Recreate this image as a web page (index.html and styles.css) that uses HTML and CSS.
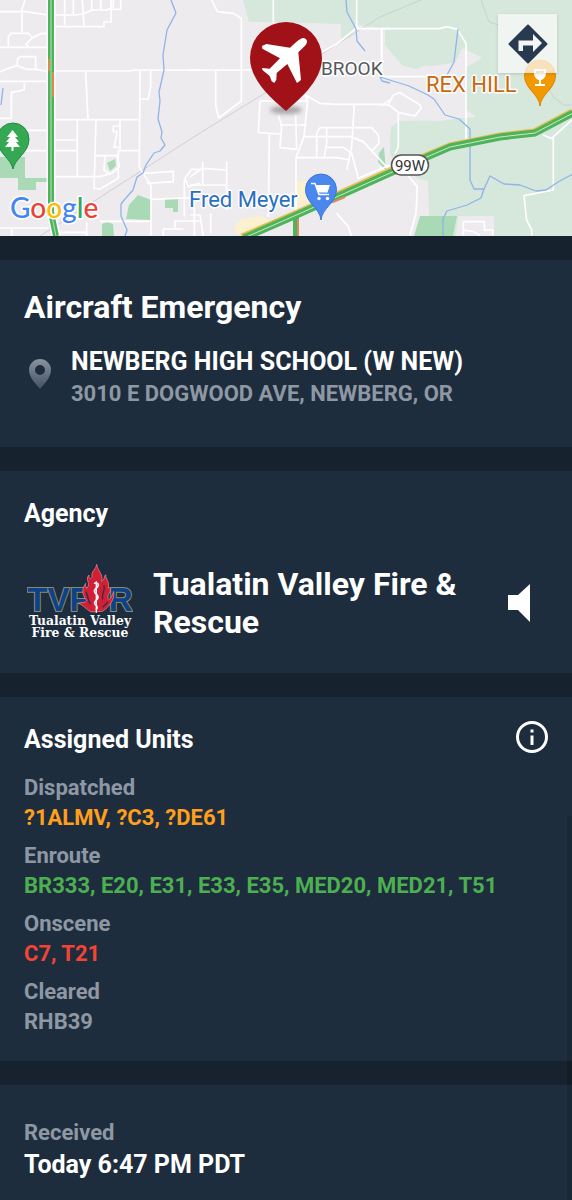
FILE: index.html
```html
<!DOCTYPE html>
<html lang="en">
<head>
<meta charset="utf-8">
<meta name="viewport" content="width=device-width, initial-scale=1">
<title>Aircraft Emergency</title>
<link rel="stylesheet" href="styles.css">
</head>
<body>
<main class="incident">
  <section class="map" aria-label="Incident map">
    <svg class="map-canvas" viewBox="0 0 572 236" preserveAspectRatio="xMidYMid slice" role="img" aria-label="Map of Newberg">
      <rect width="572" height="236" fill="#eeebef"/>
      <!-- parks and wooded areas -->
      <g fill="#d6e7dc">
        <path d="M243 0H572V236H446L450 236 430 236 428 181 419 179 399 166 390 154V126L402 119 440 121 475 116 458 104 467 61 481 57 462 49 458 62 432 66 418 69 407 71 385 45V29L358 25 350 38 341 39V24L262 22 249 22Z"/>
      </g>
      <path d="M380 42L397 64 415 69 428 65 432 76 448 77 462 48 482 58 465 68 465 110 475 117 440 120 400 121 391 127 389 150 380 160Z" fill="#eeebef"/>
      <path d="M458 216H494V236H456Z" fill="#eeebef"/>
      <g fill="#a9dab5">
        <path d="M0 157H25V178H48V182H36V190H18V178H0Z"/>
        <path d="M107 163l8-4 1 7-6 5zM126 219l3-14 9-10 13 5v20zM165 199h13v13h-5v-4h-8zM102 224l5-2 6 2 1 12h-12zM0 229v7z"/>
        <path d="M420 216H457L453 236H414ZM379 153l5-6 2 24-8-9z"/>
      </g>
      <path d="M234 226l8-7 20-3 8 6-20 12h-14zM297 181h15v19l-18 10z" fill="#fbf0cf"/>
      <!-- railway and trails -->
      <path d="M40 236L200 133 270 90 325 52 380 17 440-8M481 0l8 22 20 6M549 88l5 10 10 7h8" fill="none" stroke="#cfcfd3"/>
      <!-- minor roads, west -->
      <g class="road" transform="scale(.3333)">
        <path d="M0 35H75L145 45M75 0L66 28V97M0 142H145M25 142V110L33 100H85L97 114 78 133 88 142M97 114L125 100H145M0 216L25 205 52 197V178L62 170H107V208M52 197L80 208H110L135 213H380L410 210H600M0 244H145M73 250V270L34 277V355H0M75 391H145M75 452H145M0 684H145M35 684V710"/>
        <path d="M165 45H225L250 42 275 30H320L340 20V0M194 0V76M220 0V42M247 0L252 78M275 0V30M302 0V30M333 0V66H312V80H165M362 0V28H335M257 216L264 358M165 359H415M420 212L418 500 426 515 453 557V706M452 212V260L445 297H420M165 420H232M165 452H232M232 360V530M165 530H300L335 520 358 500 352 467H286M288 360L282 565 300 567 355 535V452H415M360 360V452M358 378H340V395H350V405L342 442H356M315 467L312 510 330 524M430 520L520 514V545L440 550M600 508H575L555 535 565 560 600 550M600 592L453 598M300 664H452M175 697H260V710M260 665V697M490 710V687H550M553 540V650M583 592V710M525 683V663H600"/>
      </g>
      <!-- minor roads, centre -->
      <g class="road" transform="translate(190) scale(.3333)">
        <path d="M65 0L82 35 130 40 154 55V303L86 354 77 315V210M0 210H185M250 0V70M500 0V86H600M497 86L440 132 395 157M575 86V230M345 285L390 310 440 313H580L600 300M210 303H350M210 303L205 398 270 402M345 285L353 303 342 410 318 473V640M265 345L275 375 270 443 320 448 317 345M275 375H345M238 402L235 650M270 375H350M342 410H480L520 425 580 490 600 510M380 473V400L390 383H545L565 405 567 430 545 453M410 383V430L403 470M493 315L485 440 470 510M410 442H460L485 460 505 535 600 495M320 473H440L480 480M0 530L38 505 110 510M38 485V555H110M110 485V630M0 555H38M440 640L475 680 485 710M0 645H30L40 710M62 640V700"/>
      </g>
      <!-- minor roads, east -->
      <g class="road" transform="translate(380) scale(.3333)">
        <path d="M5 210V86H180L200 80 232 88 258 130V420M5 230H145M0 315H25L40 285 60 278 120 315 123 325 105 348 55 337 27 315M55 340V440L45 462M85 528L112 560 108 640 90 706M490 405L512 415H520V570L432 587 440 660 455 690V706M515 415L576 360M0 500L20 515M250 706V665H313V690H338V706M250 690L280 695 300 706"/>
      </g>
      <!-- streams -->
      <g fill="none" stroke="#8fb4e8" stroke-width="1.3" stroke-linejoin="round">
        <path d="M171 0l5 13-9 17-4 25 1 15-5 22 1 9-2 18 4 13-1 6 4 7-5 6-6 2-8 12-3 8-6 4-4 13-8 9-4 5v12l6 14-2 6M3 88L1 105"/>
        <path d="M346 0l1 12 9 17 1 12 8 10M380 77l29 9 19 9 6 4 11 16 14 4 11 10v51l4 9h10l6-13 14 8 16 1 16 6 10-1 12-8 13-7h6M484 189l-3 9-14 7-20 6-4 8v17M458 29l-4 33-7 13M380 77l2 4 8 2"/>
      </g>
      <!-- highway 219 -->
      <path d="M51 0V212L56 236" fill="none" stroke="#fff" stroke-width="9"/>
      <path d="M51 0V212L56 236" fill="none" stroke="#4fb35d" stroke-width="6"/>
      <path d="M51 0V212L56 236" fill="none" stroke="#b6e3b5"/>
      <path d="M49 59v12M53 72v25" stroke="#d98a4c" stroke-width="2"/>
      <path d="M296 214v22" stroke="#4fb35d" stroke-width="6"/>
      <path d="M298 219v17" stroke="#df8a5c" stroke-width="2"/>
      <!-- highway 99W -->
      <g fill="none" stroke-linejoin="round">
        <path d="M242 237L300 212 390 171 450 146 500 136 534 132 572 112" stroke="#e8bd48" stroke-width="7"/>
        <path d="M244 238L301 213 390 173 450 147 500 137 535 133 573 113" stroke="#4fb35d" stroke-width="7"/>
        <path d="M244 238L301 213 390 173 450 147 500 137 535 133 573 113" stroke="#c8ecb9"/>
        <path d="M333 202l12-5" stroke="#df8a5c" stroke-width="2"/>
      </g>
      <rect x="391.500" y="155" width="37" height="20" rx="10" fill="#fff" stroke="#555" stroke-width="1.500"/>
      <text class="map-shield" x="410" y="171">99W</text>
      <!-- place labels -->
      <text class="map-town" x="321" y="75">BROOK</text>
      <text class="map-winery" x="426" y="92">REX HILL</text>
      <text class="map-store" x="189" y="207">Fred Meyer</text>
      <!-- park marker -->
      <path d="M13 169C11 158-3 153-3 139a16 16 0 0 1 32 0c0 14-14 19-16 30Z" fill="#34a853" stroke="#1f8a43"/>
      <path d="M12.500 130l5.500 7h-3l4 5h-3l4 5h-6.500v4h-2v-4H5l4-5H6l4-5H7z" fill="#fff"/>
      <!-- store marker -->
      <path d="M321 220C320 208 305.500 203 305.500 189.500a15.500 15.500 0 0 1 31 0C336.500 203 322 208 321 220Z" fill="#4a87ee" stroke="#3c75d6"/>
      <path d="M311 183.500h4l4 11h10" fill="none" stroke="#fff" stroke-width="1.500"/>
      <path d="M315.500 185H330l-2.500 7.500h-9.500z" fill="#fff"/>
      <circle cx="319" cy="198.500" r="1.700" fill="#fff"/><circle cx="327.500" cy="198.500" r="1.700" fill="#fff"/>
      <!-- winery marker -->
      <path d="M540 106C539 94 524.500 89 524.500 75.500a15.500 15.500 0 0 1 31 0C555.500 89 541 94 540 106Z" fill="#f29900" stroke="#dd8500"/>
      <path d="M534 69h12v4c0 4-2.500 6.500-5 7v4h4v2h-10v-2h4v-4c-2.500-.5-5-3-5-7zM536 71v2h8v-2z" fill="#fff" fill-rule="evenodd"/>
      <!-- incident marker -->
      <ellipse class="pin-shadow" cx="286" cy="110" rx="16" ry="4"/>
      <path d="M286 111C276 102 250 82 250 58a36 36 0 0 1 72 0C322 82 296 102 286 111Z" fill="#a01217"/>
      <path transform="translate(190) scale(.3333)" d="M333 116C342 110 355 119 350 130C347 138 336 146 325 157L333 240 321 249 292 192 260 219 259 239 253 249 245 244 239 228 218 211 216 204 239 206 270 175 217 146 216 138 229 132 300 143C312 131 323 121 333 116Z" fill="#fff"/>
      <text class="map-brand" x="10" y="218"><tspan fill="#4285f4">G</tspan><tspan fill="#ea4335">o</tspan><tspan fill="#fbbc05">o</tspan><tspan fill="#4285f4">g</tspan><tspan fill="#34a853">l</tspan><tspan fill="#ea4335">e</tspan></text>
    </svg>
    <button class="directions" type="button" aria-label="Directions">
      <svg viewBox="0 0 40 40" width="40" height="40" aria-hidden="true">
        <path d="M20 1.500L38.500 20 20 38.500 1.500 20Z" fill="#283a50" stroke="#283a50" stroke-width="2" stroke-linejoin="round"/>
        <path d="M10.500 27V16.500H25V10l9 9-9 9v-6.500H15V27Z" fill="#f4f6f6"/>
      </svg>
    </button>
  </section>

  <section class="card card-summary">
    <h1 class="title">Aircraft Emergency</h1>
    <div class="location">
      <svg class="location-icon" viewBox="0 0 22 30" aria-hidden="true">
        <defs><linearGradient id="pin" x1="0" y1="0" x2="0" y2="1"><stop offset="0" stop-color="#8a929d"/><stop offset="1" stop-color="#435265"/></linearGradient></defs>
        <path d="M11 0a11 11 0 0 1 11 11c0 8-8 15-11 19C8 26 0 19 0 11A11 11 0 0 1 11 0Zm0 6a5 5 0 1 0 0 10 5 5 0 0 0 0-10Z" fill="url(#pin)" fill-rule="evenodd"/>
      </svg>
      <address class="place">
        <span class="place-name">NEWBERG HIGH SCHOOL (W NEW)</span>
        <span class="place-street">3010 E DOGWOOD AVE, NEWBERG, OR</span>
      </address>
    </div>
  </section>

  <section class="card card-agency">
    <h2 class="heading">Agency</h2>
    <div class="agency">
      <svg class="agency-logo" viewBox="36 36 318 234" role="img" aria-label="TVF&amp;R Tualatin Valley Fire &amp; Rescue">
        <text class="logo-letters" x="37" y="177">TVF</text>
        <text class="logo-letters" x="281" y="177">R</text>
        <path d="M245 37C248 58 265 65 260 88C270 85 266 73 272 68C272 82 284 88 280 108C292 105 286 118 280 128C276 145 284 152 296 118C300 140 284 165 262 178L228 180C213 172 204 158 190 154C200 150 211 154 215 146C202 130 199 112 212 94C209 108 217 112 219 103C225 92 210 82 222 69C221 82 230 83 231 73C228 58 243 53 245 37Z" fill="#d31f35" stroke="#e8949b" stroke-width="2"/>
        <path d="M213 120c8 10 2 24 14 36M266 100c8 14-10 28-2 42M279 150l-16 16" fill="none" stroke="#26324a" stroke-width="4"/>
        <path d="M244 88V182" stroke="#fff" stroke-width="4"/>
        <path d="M238 96c4-8 17 0 10 8-6 7-14 10-8 18 5 7 14 10 7 19-7 8-11 10-6 17 6 5 8 10 2 15" fill="none" stroke="#f4f5f7" stroke-width="5"/>
        <text class="logo-name" x="195" y="219">Tualatin Valley</text>
        <text class="logo-name" x="195" y="254">Fire &amp; Rescue</text>
      </svg>
      <p class="agency-name">Tualatin Valley Fire &amp; Rescue</p>
      <button class="icon-button audio" type="button" aria-label="Play radio">
        <svg viewBox="0 0 22 38" width="22" height="38" aria-hidden="true"><path d="M0 11h10L22 0v38L10 26H0Z" fill="#fff"/></svg>
      </button>
    </div>
  </section>

  <section class="card card-units">
    <div class="units-head">
      <h2 class="heading">Assigned Units</h2>
      <button class="icon-button" type="button" aria-label="Unit status help">
        <svg viewBox="0 0 32 32" width="32" height="32" aria-hidden="true"><circle cx="16" cy="16" r="14.500" fill="none" stroke="#fff" stroke-width="3"/><path d="M14.500 8.500h3v3h-3zM14.500 14.500h3v9.500h-3z" fill="#fff"/></svg>
      </button>
    </div>
    <dl class="units">
      <div><dt>Dispatched</dt><dd class="dispatched">?1ALMV, ?C3, ?DE61</dd></div>
      <div><dt>Enroute</dt><dd class="enroute">BR333, E20, E31, E33, E35, MED20, MED21, T51</dd></div>
      <div><dt>Onscene</dt><dd class="onscene">C7, T21</dd></div>
      <div><dt>Cleared</dt><dd>RHB39</dd></div>
    </dl>
  </section>

  <section class="card card-time">
    <p class="time-label">Received</p>
    <p class="time-value">Today 6:47 PM PDT</p>
  </section>
</main>
</body>
</html>
```
FILE: styles.css
```css
* { box-sizing: border-box; }

body {
  margin: 0;
  background: #16222d;
  color: #fff;
  font-family: Roboto, "Noto Sans", sans-serif;
  font-weight: 700;
}

h1, h2, p, dl, dd { margin: 0; }

.incident {
  display: flex;
  flex-direction: column;
  gap: 24px;
}

/* scroll thumb */
.incident::after {
  content: "";
  position: fixed;
  right: 0;
  bottom: 0;
  width: 5px;
  height: 32vh;
  background: rgba(0, 0, 0, .12);
}

.map { position: relative; }

.map-canvas {
  display: block;
  width: 100%;
  height: 236px;
}

.road {
  fill: none;
  stroke: #fff;
  stroke-width: 5;
  stroke-linejoin: round;
}

.map text {
  font-weight: 400;
  paint-order: stroke;
  stroke: #fff;
  stroke-width: 3px;
  stroke-linejoin: round;
}

.map .map-shield {
  font-size: 15px;
  fill: #333;
  stroke: none;
  text-anchor: middle;
}

.map-town { font-size: 19px; fill: #55585c; }
.map-winery { font-size: 22px; fill: #c9670e; }
.map-store { font-size: 22px; fill: #2a6fc4; }
.map .map-brand { font-family: Lato, sans-serif; font-size: 28px; font-weight: 500; }

.pin-shadow { fill: #777; opacity: .6; filter: blur(2px); }

.directions {
  position: absolute;
  top: 14px;
  right: 15px;
  display: grid;
  place-items: center;
  width: 59px;
  height: 59px;
  padding: 0;
  border: 0;
  background: rgba(250, 250, 250, .75);
  box-shadow: 0 1px 3px rgba(0, 0, 0, .15);
}

.card {
  padding: 24px;
  background: #1e2d3d;
}

.card-summary { padding-bottom: 37px; }

.title {
  font-size: 32px;
  line-height: 46px;
}

.location {
  display: flex;
  align-items: center;
  gap: 20px;
  margin-top: 16px;
  padding-left: 5px;
}

.location-icon {
  flex: none;
  width: 22px;
  height: 30px;
  margin-bottom: 8px;
}

.place { font-style: normal; }
.place-name, .place-street { display: block; line-height: 32px; }
.place-name { font-size: 25px; }
.place-street { font-size: 22px; color: #8e98a4; }

.heading {
  font-size: 25px;
  line-height: 38px;
}

.card-agency { padding-bottom: 31px; }

.agency {
  display: flex;
  align-items: center;
  gap: 20px;
  margin-top: 31px;
  padding-left: 3px;
}

.agency-logo { flex: none; width: 106px; height: 78px; }
.logo-letters {
  font: 700 99px "Liberation Sans", Arial, sans-serif;
  fill: #0d4286;
  stroke: #8c8a6c;
  stroke-width: 6px;
  paint-order: stroke;
}
.logo-name {
  font: 700 37px "DejaVu Serif", serif;
  fill: #fff;
  text-anchor: middle;
}

.agency-name {
  flex: 1;
  font-size: 32px;
  line-height: 38px;
}

.icon-button {
  display: grid;
  place-items: center;
  padding: 0;
  border: 0;
  background: none;
}

.audio { margin-right: 18px; }

.units-head {
  display: flex;
  align-items: flex-start;
  justify-content: space-between;
}

.units {
  display: grid;
  gap: 8px;
  margin-top: 14px;
  font-size: 22px;
  line-height: 30px;
  color: #8e98a4;
}

.dispatched { color: #ff9f1c; }
.enroute { color: #4caf50; }
.onscene { color: #f44336; }

.card-time { padding-top: 32px; padding-bottom: 20px; }
.time-label { font-size: 22px; line-height: 32px; color: #8e98a4; }
.time-value { font-size: 25px; line-height: 32px; }
```
